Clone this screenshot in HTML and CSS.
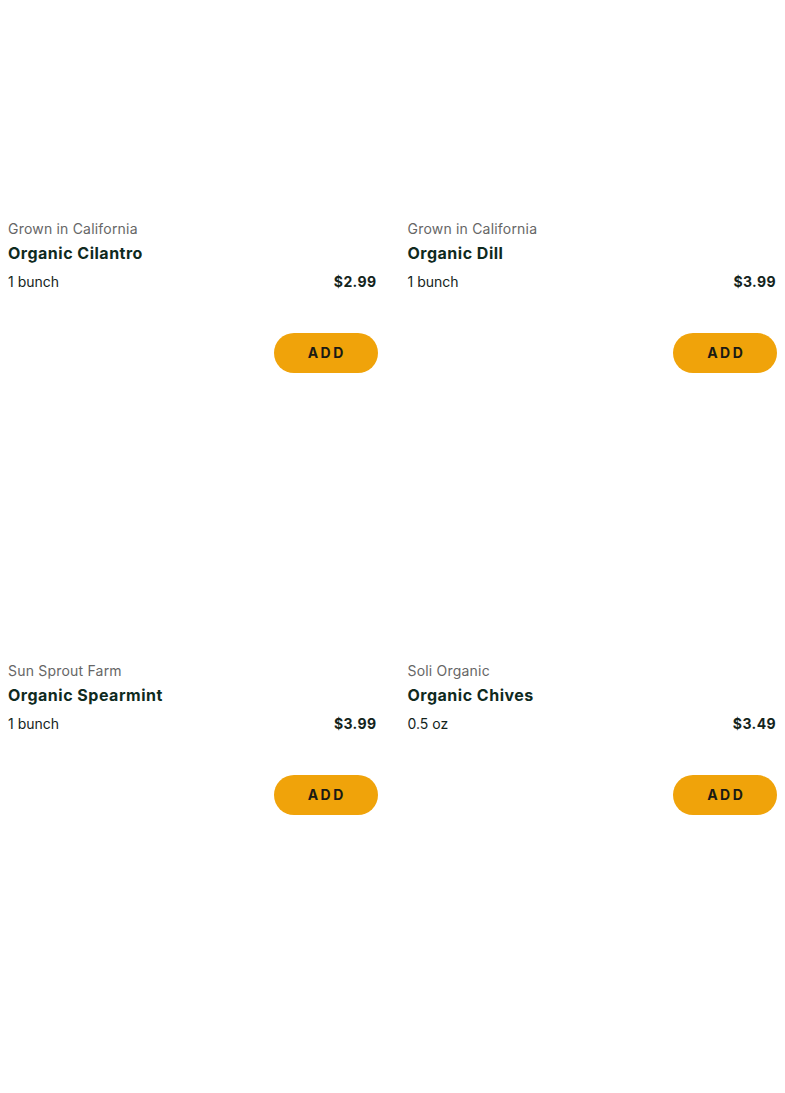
FILE: index.html
```html
<!DOCTYPE html>
<html>
<head>
<meta charset="utf-8">
<link rel="stylesheet" href="styles.css">
</head>
<body>
<div class="grid">
  <div class="card">
    <div class="image"></div>
    <div class="vendor">Grown in California</div>
    <div class="name">Organic Cilantro</div>
    <div class="row"><span class="size">1 bunch</span><span class="price">$2.99</span></div>
    <div class="actions"><button class="add">ADD</button></div>
  </div>
  <div class="card">
    <div class="image"></div>
    <div class="vendor">Grown in California</div>
    <div class="name">Organic Dill</div>
    <div class="row"><span class="size">1 bunch</span><span class="price">$3.99</span></div>
    <div class="actions"><button class="add">ADD</button></div>
  </div>
  <div class="card">
    <div class="image"></div>
    <div class="vendor">Sun Sprout Farm</div>
    <div class="name">Organic Spearmint</div>
    <div class="row"><span class="size">1 bunch</span><span class="price">$3.99</span></div>
    <div class="actions"><button class="add">ADD</button></div>
  </div>
  <div class="card">
    <div class="image"></div>
    <div class="vendor">Soli Organic</div>
    <div class="name">Organic Chives</div>
    <div class="row"><span class="size">0.5 oz</span><span class="price">$3.49</span></div>
    <div class="actions"><button class="add">ADD</button></div>
  </div>
</div>
</body>
</html>
```
FILE: styles.css
```css
body {
  margin: 8px;
  background: #ffffff;
  font-family: Inter, "Noto Sans", sans-serif;
  color: #14241c;
}
.grid {
  display: grid;
  grid-template-columns: 1fr 1fr;
  column-gap: 30px;
  row-gap: 77px;
}
.card {
  display: flex;
  flex-direction: column;
}
.image {
  height: 211px;
  background: #ffffff;
}
.vendor {
  font-size: 14px;
  line-height: 20px;
  color: #666666;
  letter-spacing: 0.2px;
}
.name {
  margin-top: 2px;
  font-size: 16px;
  line-height: 24px;
  font-weight: 700;
  color: #0f2a1e;
  letter-spacing: 0.5px;
}
.row {
  margin-top: 7px;
  display: flex;
  justify-content: space-between;
  align-items: center;
  font-size: 14px;
  line-height: 20px;
}
.size {
  color: #14241c;
}
.price {
  font-weight: 700;
  color: #14241c;
  letter-spacing: 0.4px;
  margin-right: 1px;
}
.actions {
  margin-top: 41px;
  display: flex;
  justify-content: flex-end;
}
.add {
  width: 104px;
  height: 40px;
  border: none;
  border-radius: 20px;
  background: #f0a30a;
  color: #1a1a14;
  font-family: Inter, "Noto Sans", sans-serif;
  font-size: 14px;
  font-weight: 700;
  letter-spacing: 2.5px;
  padding: 0 0 2px 2.5px;
  cursor: pointer;
}
```
